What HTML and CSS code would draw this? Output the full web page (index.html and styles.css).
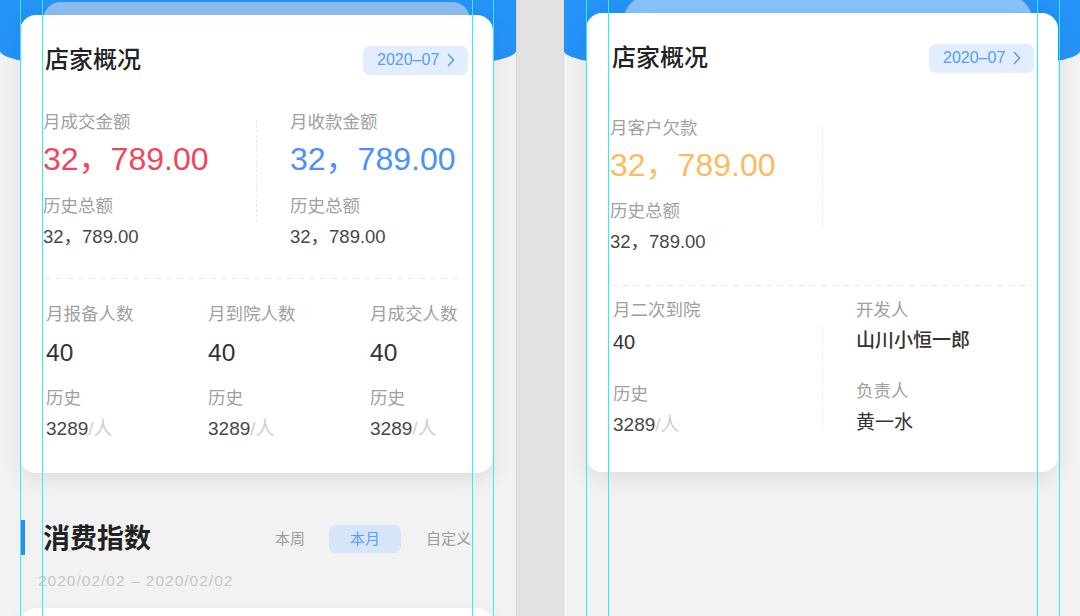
FILE: index.html
```html
<!DOCTYPE html>
<html lang="zh-CN">
<head>
<meta charset="utf-8">
<title>店家概况</title>
<link rel="stylesheet" href="styles.css">
</head>
<body>
<div class="page">
  <section class="panel">
    <div class="hero"></div>
    <div class="backing backing-left"></div>
    <div class="card card-left">
      <div class="card-head">
        <h2 class="card-title">店家概况</h2>
        <div class="month-pill"><span>2020–07</span><svg class="chev" viewBox="0 0 8 14" width="8" height="14"><path d="M1.5 1.5 L6.5 7 L1.5 12.5" fill="none" stroke="#5b9bf5" stroke-width="1.5" stroke-linecap="round" stroke-linejoin="round"/></svg></div>
      </div>
      <div class="money-row">
        <div class="money-col col-l">
          <div class="label">月成交金额</div>
          <div class="big red">32，789.00</div>
          <div class="label mt15">历史总额</div>
          <div class="sub">32，789.00</div>
        </div>
        <div class="vdiv vdiv-a"></div>
        <div class="money-col col-r">
          <div class="label">月收款金额</div>
          <div class="big blue">32，789.00</div>
          <div class="label mt15">历史总额</div>
          <div class="sub">32，789.00</div>
        </div>
      </div>
      <div class="hdash hdash-left"></div>
      <div class="people-grid">
        <div class="people-col">
          <div class="label">月报备人数</div>
          <div class="num">40</div>
          <div class="label mt17">历史</div>
          <div class="count">3289<span class="unit">/人</span></div>
        </div>
        <div class="people-col">
          <div class="label">月到院人数</div>
          <div class="num">40</div>
          <div class="label mt17">历史</div>
          <div class="count">3289<span class="unit">/人</span></div>
        </div>
        <div class="people-col">
          <div class="label">月成交人数</div>
          <div class="num">40</div>
          <div class="label mt17">历史</div>
          <div class="count">3289<span class="unit">/人</span></div>
        </div>
      </div>
    </div>

    <div class="section-head">
      <div class="bar"></div>
      <h3 class="section-title">消费指数</h3>
      <div class="tabs">
        <span class="tab">本周</span>
        <span class="tab tab-on">本月</span>
        <span class="tab">自定义</span>
      </div>
    </div>
    <div class="range">2020/02/02 – 2020/02/02</div>
    <div class="card card-next"></div>
  </section>

  <div class="gap"></div>

  <section class="panel">
    <div class="hero"></div>
    <div class="backing backing-right"></div>
    <div class="card card-right">
      <div class="card-head">
        <h2 class="card-title">店家概况</h2>
        <div class="month-pill"><span>2020–07</span><svg class="chev" viewBox="0 0 8 14" width="8" height="14"><path d="M1.5 1.5 L6.5 7 L1.5 12.5" fill="none" stroke="#5b9bf5" stroke-width="1.5" stroke-linecap="round" stroke-linejoin="round"/></svg></div>
      </div>
      <div class="money-row money-row-r">
        <div class="money-col col-l2">
          <div class="label">月客户欠款</div>
          <div class="big orange">32，789.00</div>
          <div class="label mt14">历史总额</div>
          <div class="sub">32，789.00</div>
        </div>
        <div class="vdiv vdiv-b"></div>
        <div class="money-col"></div>
      </div>
      <div class="hdash hdash-right"></div>
      <div class="info-row">
        <div class="info-col col-l3">
          <div class="label">月二次到院</div>
          <div class="num-s">40</div>
          <div class="label mt26">历史</div>
          <div class="count">3289<span class="unit">/人</span></div>
        </div>
        <div class="vdiv vdiv-c"></div>
        <div class="info-col col-r3">
          <div class="label">开发人</div>
          <div class="name name-strong">山川小恒一郎</div>
          <div class="label mt24">负责人</div>
          <div class="name name-plain">黄一水</div>
        </div>
      </div>
    </div>
  </section>

  <div class="guide g1"></div>
  <div class="guide g2"></div>
  <div class="guide g3"></div>
  <div class="guide g4"></div>
  <div class="guide g5"></div>
  <div class="guide g6"></div>
  <div class="guide g7"></div>
  <div class="guide g8"></div>
</div>
</body>
</html>
```
FILE: styles.css
```css
* { box-sizing: border-box; }
html, body { margin: 0; padding: 0; }
body {
  width: 1080px;
  height: 616px;
  overflow: hidden;
  background: #e2e2e2;
  font-family: "Liberation Sans", "Noto Sans CJK SC", sans-serif;
  color: #333;
}
h2, h3 { margin: 0; }

.page {
  position: relative;
  display: flex;
  height: 616px;
}
.panel {
  width: 516px;
  flex: 0 0 516px;
  height: 616px;
  background: #f2f2f2;
  overflow: hidden;
}
.gap {
  width: 48px;
  flex: 0 0 48px;
  background: #e2e2e2;
  box-shadow: inset 1px 0 #d5d5d5, inset -1px 0 #d8d8d8;
}

.hero {
  height: 75px;
  background: #2592f8;
  border-radius: 0 0 50% 50% / 0 0 24px 24px;
}
.backing {
  height: 30px;
  border-radius: 18px 18px 0 0;
}
.backing-left {
  margin: -73px 46px 0 43px;
  background: #8cbcef;
}
.backing-right {
  margin: -79px 48px 0 60px;
  background: #86c1fc;
  border-radius: 24px 24px 0 0;
}

.card {
  position: relative;
  background: #fff;
  border-radius: 16px;
  box-shadow: 0 8px 22px rgba(0, 0, 0, 0.08);
}
.card-left {
  margin: -17px 23px 0 20px;
  padding: 30px 25px 31px 23px;
}
.card-right {
  margin: -13px 22px 0 22px;
  padding: 30px 24px 34px 24px;
}

.card-head {
  display: flex;
  align-items: center;
  justify-content: space-between;
  height: 30px;
}
.card-title {
  margin-left: 2px;
  font-size: 24px;
  line-height: 30px;
  font-weight: 500;
  color: #222;
}
.month-pill {
  display: flex;
  align-items: center;
  width: 105px;
  height: 29px;
  padding-left: 14px;
  background: #e2edfd;
  border-radius: 7px;
  color: #5b9bf5;
  font-size: 16px;
}
.month-pill .chev {
  margin-left: 8px;
}

.label {
  font-size: 17.5px;
  line-height: 24px;
  color: #a0a0a0;
  white-space: nowrap;
}
.mt14 { margin-top: 14px; }
.mt15 { margin-top: 15px; }
.mt17 { margin-top: 17px; }
.mt24 { margin-top: 24px; }
.mt26 { margin-top: 26px; }

.money-row {
  display: flex;
  margin-top: 35px;
}
.money-row-r { margin-top: 43px; }
.col-l { width: 213px; }
.col-r { padding-left: 33px; }
.col-l2 { width: 212px; }

.big {
  margin-top: 5px;
  font-size: 32px;
  line-height: 40px;
  white-space: nowrap;
}
.red { color: #f0465c; }
.blue { color: #4b91f7; }
.orange { color: #fcbb5e; }
.sub {
  margin-top: 6px;
  font-size: 18.5px;
  line-height: 26px;
  color: #474747;
  white-space: nowrap;
}

.vdiv {
  width: 0;
  border-left: 1px dashed #e9e9e9;
  align-self: flex-start;
}
.vdiv-a { margin-top: 10px; height: 102px; }
.vdiv-b { margin-top: 11px; height: 101px; }
.vdiv-c { margin-top: 29px; height: 103px; }

.hdash {
  height: 1px;
  background: repeating-linear-gradient(90deg, #e9e9e9 0 6px, transparent 6px 11px);
}
.hdash-left { margin: 28px 8px 0 2px; }
.hdash-right { margin: 30px 2px 0 2px; }

.people-grid {
  display: grid;
  grid-template-columns: 162px 162px 1fr;
  margin-top: 23px;
  padding-left: 3px;
}
.num {
  margin-top: 11px;
  font-size: 24.5px;
  line-height: 32px;
  color: #333;
}
.count {
  margin-top: 6px;
  font-size: 19px;
  line-height: 26px;
  color: #474747;
  white-space: nowrap;
}
.unit { color: #cfcfcf; }

.info-row {
  display: flex;
  margin-top: 12px;
}
.col-l3 { width: 212px; padding-left: 3px; }
.col-r3 { padding-left: 33px; }
.num-s {
  margin-top: 6px;
  font-size: 20px;
  line-height: 28px;
  color: #333;
}
.name {
  font-size: 19px;
  color: #333;
  white-space: nowrap;
}
.name-strong {
  margin-top: 5px;
  line-height: 28px;
  font-weight: 500;
}
.name-plain {
  margin-top: 7px;
  line-height: 26px;
}

.section-head {
  display: flex;
  align-items: center;
  height: 36px;
  margin: 48px 45px 0 20px;
}
.bar {
  width: 5px;
  height: 35px;
  margin-top: -4px;
  background: #2f8cf5;
}
.section-title {
  margin-left: 18px;
  font-size: 27px;
  line-height: 36px;
  font-weight: 700;
  color: #222;
}
.tabs {
  display: flex;
  align-items: center;
  margin-left: auto;
}
.tab {
  font-size: 15px;
  line-height: 28px;
  color: #9c9c9c;
}
.tab-on {
  width: 72px;
  height: 28px;
  margin: 0 25px 0 24px;
  text-align: center;
  background: #d7e5f8;
  border-radius: 7px;
  color: #5d9cf6;
}
.range {
  margin: 14px 0 0 38px;
  font-size: 15.5px;
  line-height: 20px;
  letter-spacing: 1px;
  color: #c6c6c6;
  white-space: nowrap;
}
.card-next {
  height: 100px;
  margin: 17px 23px 0 20px;
}

.guide {
  position: absolute;
  top: 0;
  width: 1px;
  height: 616px;
  background: #2ef0f4;
  z-index: 5;
}
.g1 { left: 20px; }
.g2 { left: 42px; }
.g3 { left: 472px; }
.g4 { left: 493px; }
.g5 { left: 586px; }
.g6 { left: 608px; }
.g7 { left: 1037px; }
.g8 { left: 1059px; }
```
